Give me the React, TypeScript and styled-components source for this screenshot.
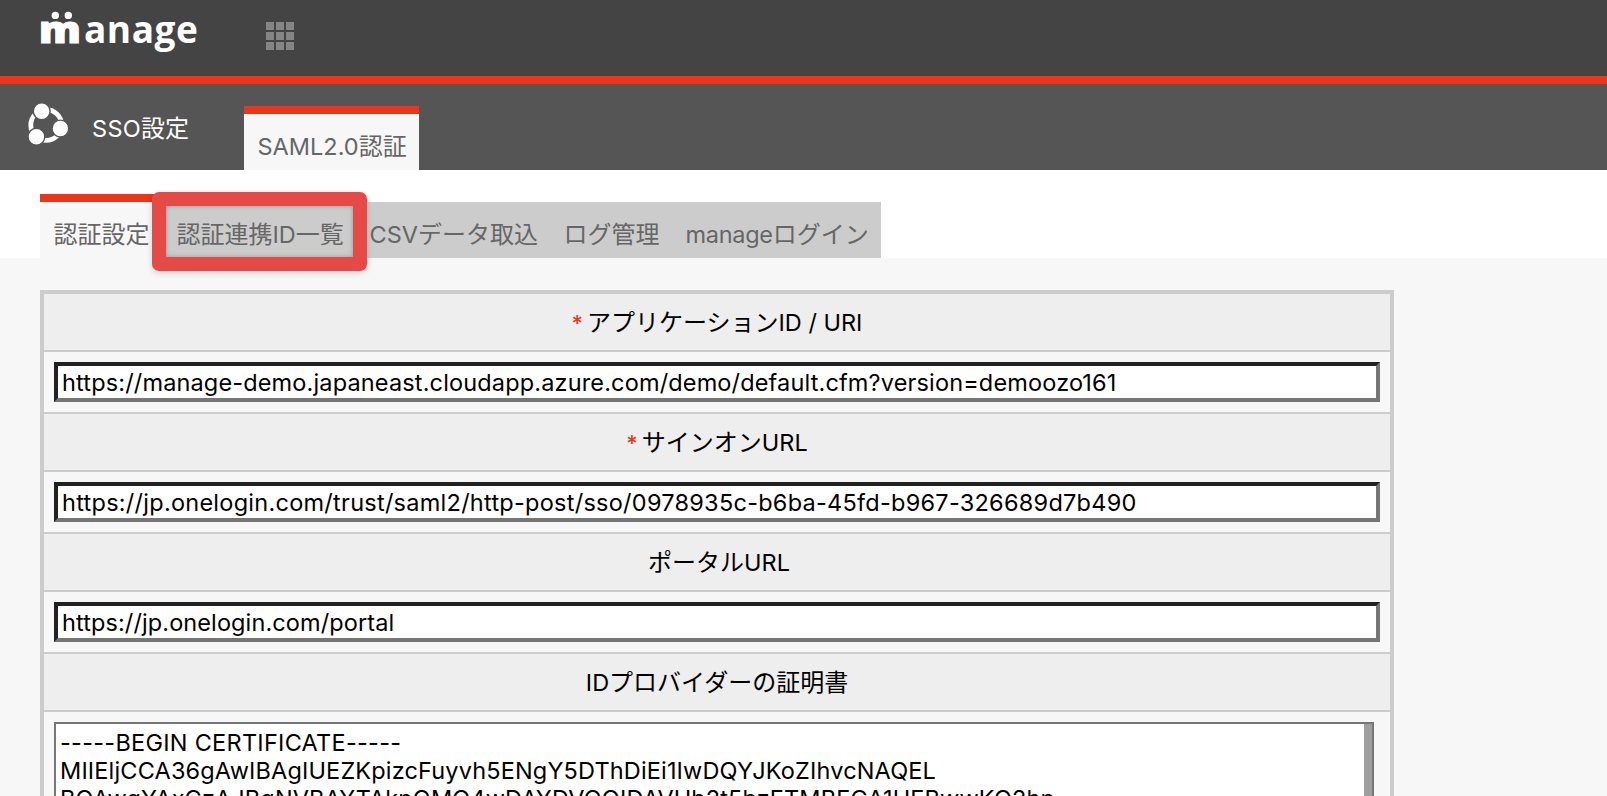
import React from 'react';
import styled, { createGlobalStyle } from 'styled-components';

const red = '#ec351b';
const line = '#cccccc';
const page = '#f7f7f7';

const GlobalStyle = createGlobalStyle`
  * { box-sizing: border-box; }
  html, body { margin: 0; background: ${page}; }
  body {
    font-family: Inter, 'Noto Sans CJK JP', sans-serif;
    font-size: 24px;
    color: #000;
  }
`;

const Page = styled.div`
  display: flex;
  flex-direction: column;
  height: 796px;
  overflow: hidden;
`;

const TopBar = styled.header`
  display: flex;
  flex: none;
  align-items: flex-start;
  height: 84px;
  padding-left: 40px;
  background: #444444;
  border-bottom: 8px solid ${red};
`;

const Logo = styled.div`
  position: relative;
  display: flex;
  width: 226px;
  height: 50px;
  padding-top: 2px;
  color: #fff;
  font-family: 'Open Sans', 'Noto Sans', sans-serif;
  font-size: 37px;
  font-weight: 700;
  line-height: 53px;
`;

const LogoM = styled.span`
  width: 44px;
  margin-left: -1px;
  font-weight: 800;
  transform: scaleX(1.13);
  transform-origin: 0 0;
  -webkit-text-stroke: 1.2px #fff;
`;

const LogoRest = styled.span`
  margin-left: 1px;
  letter-spacing: 0.5px;
`;

const LogoDots = styled.svg`
  position: absolute;
  left: 11px;
  top: 11px;
`;

const AppGrid = styled.div`
  display: grid;
  grid-template-columns: repeat(3, 8px);
  grid-auto-rows: 8px;
  gap: 2px;
  margin-top: 22px;
`;

const GridCell = styled.i`
  background: #858585;
`;

const SubBar = styled.div`
  display: flex;
  flex: none;
  align-items: flex-end;
  height: 86px;
  background: #555555;
`;

const ShareIcon = styled.svg`
  flex: none;
  margin: 0 14px 24px 26px;
`;

const Section = styled.h1`
  width: 152px;
  margin: 0;
  padding-bottom: 23px;
  color: #fff;
  font-size: 24px;
  font-weight: 400;
  line-height: 36px;
  white-space: nowrap;
`;

const Tab = styled.a<{ $active?: boolean; $width: number }>`
  flex: none;
  width: ${(p) => p.$width}px;
  height: ${(p) => (p.$active ? 64 : 56)}px;
  padding: 15px 0 0 13.5px;
  border-top: ${(p) => (p.$active ? `8px solid ${red}` : '0')};
  background: ${(p) => (p.$active ? page : line)};
  color: #666666;
  line-height: 36px;
  white-space: nowrap;
`;

const TabRow = styled.nav`
  position: relative;
  display: flex;
  flex: none;
  align-items: flex-end;
  height: 88px;
  padding-left: 40px;
  background: #fff;
`;

const Highlight = styled.div`
  position: absolute;
  left: 151.5px;
  top: 21.5px;
  width: 215.5px;
  height: 79px;
  border: 14px solid #e64a46;
  border-radius: 7px;
  box-shadow: 0 2px 6px rgba(0, 0, 0, 0.16), inset 0 0 5px rgba(0, 0, 0, 0.25);
`;

const Latin = styled.span<{ $spacing?: number }>`
  font-size: 23.5px;
  letter-spacing: ${(p) => p.$spacing ?? 0}px;
`;

const FormTable = styled.section`
  flex: none;
  width: 1354px;
  height: 600px;
  margin: 32px 0 0 40px;
  border: 4px solid ${line};
`;

const Heading = styled.div<{ $indent?: number }>`
  height: 58px;
  padding-top: 11px;
  padding-left: ${(p) => p.$indent ?? 0}px;
  border-bottom: 2px solid ${line};
  background: #eeeeee;
  line-height: 36px;
  text-align: center;
`;

const Required = styled.span`
  margin-right: 4px;
  color: ${red};
  font-size: 22px;
  font-weight: 500;
`;

const FieldCell = styled.div`
  height: 62px;
  padding: 10px;
  border-bottom: 2px solid ${line};
`;

const TextField = styled.input<{ $spacing: number }>`
  display: block;
  width: 100%;
  height: 40px;
  padding: 0 4px;
  border: 4px solid;
  border-color: #212121 #767676 #767676 #212121;
  border-radius: 0;
  outline: 0;
  background: #fff;
  color: #000;
  font-family: Inter, sans-serif;
  font-size: 23.5px;
  letter-spacing: ${(p) => p.$spacing}px;
`;

const CertificateCell = styled.div`
  padding: 10px 16px 10px 10px;
`;

const CertificateBox = styled.div`
  display: flex;
  height: 300px;
  border: 2px solid #767676;
  background: #fff;
`;

const CertificateText = styled.div`
  flex: 1;
  padding: 5px 4px;
`;

const CertificateLine = styled.div<{ $spacing: number }>`
  height: 28px;
  font-size: 23.5px;
  line-height: 28px;
  letter-spacing: ${(p) => p.$spacing}px;
  white-space: nowrap;
`;

const ScrollThumb = styled.div`
  width: 8px;
  background: #9f9f9f;
`;

const fields = [
  {
    required: true,
    kana: 'アプリケーション',
    latin: 'ID / URI',
    value: 'https://manage-demo.japaneast.cloudapp.azure.com/demo/default.cfm?version=demoozo161',
    spacing: 0.15,
    indent: 0,
  },
  {
    required: true,
    kana: 'サインオン',
    latin: 'URL',
    value: 'https://jp.onelogin.com/trust/saml2/http-post/sso/0978935c-b6ba-45fd-b967-326689d7b490',
    spacing: 0.26,
    indent: 0,
  },
  {
    required: false,
    kana: 'ポータル',
    latin: 'URL',
    value: 'https://jp.onelogin.com/portal',
    spacing: 0.1,
    indent: 4,
  },
];

const certificate = [
  { text: '-----BEGIN CERTIFICATE-----', spacing: 0.27 },
  { text: 'MIIEljCCA36gAwIBAgIUEZKpizcFuyvh5ENgY5DThDiEi1IwDQYJKoZIhvcNAQEL', spacing: 0.16 },
  { text: 'BQAwgYAxCzAJBgNVBAYTAkpQMQ4wDAYDVQQIDAVUb2t5bzETMBEGA1UEBwwKQ2hp', spacing: 0.12 },
];

export default function App() {
  return (
    <Page>
      <GlobalStyle />
      <TopBar>
        <Logo>
          <LogoM>m</LogoM>
          <LogoRest>anage</LogoRest>
          <LogoDots width="22" height="9" viewBox="0 0 22 9" fill="#fff">
            <circle cx="4.3" cy="4.4" r="3.7" />
            <circle cx="17.3" cy="4.4" r="3.7" />
          </LogoDots>
        </Logo>
        <AppGrid>
          {Array.from({ length: 9 }, (_, i) => (
            <GridCell key={i} />
          ))}
        </AppGrid>
      </TopBar>
      <SubBar>
        <ShareIcon width="52" height="46" viewBox="0 0 52 46">
          <circle cx="20.2" cy="25" r="15.4" fill="none" stroke="#fff" strokeWidth="4.8" />
          <g fill="#fff" stroke="#555555" strokeWidth="1.4">
            <circle cx="15.7" cy="11.2" r="8.4" />
            <circle cx="34.4" cy="28.5" r="8.4" />
            <circle cx="10.4" cy="36.7" r="8.4" />
          </g>
        </ShareIcon>
        <Section>
          <Latin $spacing={0.3}>SSO</Latin>設定
        </Section>
        <Tab $active $width={175}>
          <Latin>SAML2.0</Latin>認証
        </Tab>
      </SubBar>
      <TabRow>
        <Tab $active $width={123}>認証設定</Tab>
        <Tab $width={193}>
          認証連携<Latin>ID</Latin>一覧
        </Tab>
        <Tab $width={194}>
          <Latin>CSV</Latin>データ取込
        </Tab>
        <Tab $width={122}>ログ管理</Tab>
        <Tab $width={209}>
          <Latin $spacing={-0.3}>manage</Latin>ログイン
        </Tab>
        <Highlight />
      </TabRow>
      <FormTable>
        {fields.map((f) => (
          <React.Fragment key={f.value}>
            <Heading $indent={f.indent}>
              {f.required && <Required>*</Required>}
              {f.kana}
              <Latin>{f.latin}</Latin>
            </Heading>
            <FieldCell>
              <TextField readOnly value={f.value} $spacing={f.spacing} />
            </FieldCell>
          </React.Fragment>
        ))}
        <Heading>
          <Latin>ID</Latin>プロバイダーの証明書
        </Heading>
        <CertificateCell>
          <CertificateBox>
            <CertificateText>
              {certificate.map((c) => (
                <CertificateLine key={c.text} $spacing={c.spacing}>
                  {c.text}
                </CertificateLine>
              ))}
            </CertificateText>
            <ScrollThumb />
          </CertificateBox>
        </CertificateCell>
      </FormTable>
    </Page>
  );
}
